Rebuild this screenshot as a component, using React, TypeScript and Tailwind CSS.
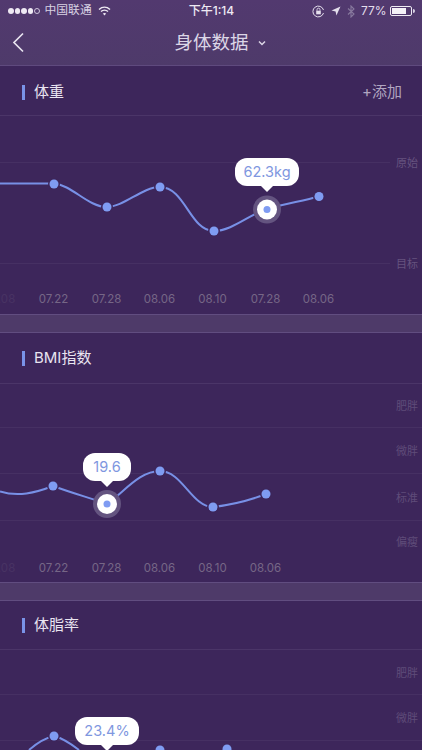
const font = { fontFamily: '"Inter", "Noto Sans CJK SC", sans-serif' };

function StatusBar() {
  return (
    <div className="flex h-[20px] items-center justify-between pl-[8px] pr-[7px] pt-[2px] text-[12px] text-[#e4deec]">
      <div className="flex w-[140px] items-center">
        <div className="flex gap-[1px]">
          <span className="h-[5.500px] w-[5.500px] rounded-full bg-[#eee9f3]" />
          <span className="h-[5.500px] w-[5.500px] rounded-full bg-[#eee9f3]" />
          <span className="h-[5.500px] w-[5.500px] rounded-full bg-[#eee9f3]" />
          <span className="h-[5.500px] w-[5.500px] rounded-full bg-[#eee9f3]" />
          <span className="h-[5.500px] w-[5.500px] rounded-full border-[0.5px] border-[#cfc6dc]" />
        </div>
        <span className="ml-[5px] text-[11.800px] text-[#d9d2e3]">中国联通</span>
        <svg className="ml-[6px]" width="13" height="10" viewBox="0 0 13 10" fill="none" stroke="#eee9f3">
          <path d="M1 3.400C4.300 .4 8.700 .4 12 3.400" strokeWidth="1.400" />
          <path d="M3 5.500C5 3.700 8 3.700 10 5.500" strokeWidth="1.400" />
          <path d="M6.500 9.600 4.800 7.500C5.800 6.700 7.200 6.700 8.200 7.500Z" fill="#eee9f3" stroke="none" />
        </svg>
      </div>
      <span className="text-[12px] font-medium text-[#eee9f3]">下午1:14</span>
      <div className="flex w-[140px] items-center justify-end">
        <svg width="13" height="13" viewBox="0 0 13 13" fill="none" stroke="#e4deec">
          <path d="M11.500 8A5.400 5.400 0 1 1 11.500 5" strokeWidth="1" />
          <rect x="4.200" y="5.700" width="4.600" height="3.600" fill="#e4deec" stroke="none" />
          <path d="M5 5.700V4.700a1.500 1.500 0 0 1 3 0v1" strokeWidth=".9" />
        </svg>
        <svg className="ml-[6px]" width="10" height="10" viewBox="0 0 10 10">
          <path d="M9.500 .5 5.400 9.500 4.600 5.400 .5 4.600Z" fill="#e4deec" />
        </svg>
        <svg className="ml-[6px]" width="8" height="13" viewBox="0 0 8 13" fill="none" stroke="#88799e" strokeWidth="1.100">
          <path d="M1 3.500 7 9 4 12V1L7 4 1 9.500" />
        </svg>
        <span className="ml-[6px] text-[#e4deec]">77%</span>
        <div className="ml-[4px] flex items-center">
          <div className="h-[10px] w-[22px] rounded-[2px] border border-[#eee9f3] p-[1px]">
            <div className="h-full w-[76%] bg-[#f4f1f7]" />
          </div>
          <div className="ml-[1px] h-[4px] w-[1.500px] rounded-r-sm bg-[#d9d2e3]" />
        </div>
      </div>
    </div>
  );
}

function NavBar() {
  return (
    <div className="relative flex h-[46px] items-center justify-center border-b border-[#5f4a7e] pl-[18px]">
      <svg className="absolute left-[12px] top-[12px]" width="13" height="21" viewBox="0 0 13 21" fill="none" stroke="#e8e3ef" strokeWidth="1.700">
        <path d="M11 1.500 2 10.500l9 9" />
      </svg>
      <span className="text-[18.500px] text-[#dcd6e6]">身体数据</span>
      <svg className="ml-[9px]" width="8" height="6" viewBox="0 0 8 6" fill="none" stroke="#dcd6e6" strokeWidth="1.500">
        <path d="M1 1.500 4 4.500 7 1.500" />
      </svg>
    </div>
  );
}

function Title({ text, add, className }: { text: string; add?: boolean; className: string }) {
  return (
    <div className={`flex items-center justify-between border-b border-[#4b3568] pl-[22px] pr-[20px] ${className}`}>
      <div className="flex items-center">
        <span className="h-[15px] w-[3px] bg-[#7a93e8]" />
        <span className="ml-[9px] text-[15px] text-[#e9e4f0]">{text}</span>
      </div>
      {add && <span className="text-[15px] text-[#b0a5c0]">+添加</span>}
    </div>
  );
}

// line with its label at the right end
function RefLine({ label, className }: { label: string; className: string }) {
  return (
    <div className={`flex items-center ${className}`}>
      <div className="h-px flex-1 bg-[#463063]" />
      <span className="ml-[6px] mr-[4px] w-[22px] pt-[2px] text-[11px] text-[#66537f]">{label}</span>
    </div>
  );
}

// label in the middle of a band, line under it
function Band({ label, height }: { label: string; height: string }) {
  return (
    <div className={`flex items-center justify-end border-b border-[#463063] pr-[4px] ${height}`}>
      <span className="w-[22px] pt-[2px] text-[11px] text-[#5f4c79]">{label}</span>
    </div>
  );
}

function Dates({ items }: { items: string[] }) {
  return (
    <div className="flex h-[12px] items-center text-[11.500px] text-[#766686]">
      <span className="ml-[-26px] w-[53px] text-center opacity-20">07.08</span>
      {items.map((d, i) => (
        <span key={i} className="w-[53px] text-center">
          {d}
        </span>
      ))}
    </div>
  );
}

function Curve({ d, dots, active }: { d: string; dots: number[][]; active: number[] }) {
  return (
    <svg className="absolute left-0 top-0" width="422" height="249" viewBox="0 0 422 249" fill="none">
      <path d={d} stroke="#7890e6" strokeWidth="2" />
      {dots.map(([x, y], i) => (
        <circle key={i} cx={x} cy={y} r="4.500" fill="#7f9cf2" stroke="#3d265b" strokeWidth="3" paintOrder="stroke" />
      ))}
      <circle cx={active[0]} cy={active[1]} r="14" fill="#645480" />
      <circle cx={active[0]} cy={active[1]} r="10" fill="#ffffff" />
      <circle cx={active[0]} cy={active[1]} r="3.500" fill="#7f9cf2" />
    </svg>
  );
}

function Tip({ text, className }: { text: string; className: string }) {
  return (
    <div className={`absolute flex h-[28px] items-center justify-center rounded-[12px] bg-white text-[14.500px] text-[#7f97e0] ${className}`}>
      {text}
      <span className="absolute left-1/2 top-[27px] h-0 w-0 -translate-x-1/2 border-x-[7px] border-t-[7px] border-x-transparent border-t-white" />
    </div>
  );
}

function Divider() {
  return <div className="h-[19px] border-y border-[#614d80] bg-[#4e3a69]" />;
}

export default function App() {
  return (
    <div className="h-screen w-full overflow-hidden bg-[#3d265b]" style={font}>
      <div className="bg-gradient-to-b from-[#52396f] to-[#4e3a6a]">
        <StatusBar />
        <NavBar />
      </div>

      <section className="relative h-[248px]">
        <Title text="体重" add className="h-[50px] pt-[3px]" />
        <div className="flex flex-col">
          <RefLine label="原始" className="mt-[36px] h-[20px]" />
          <RefLine label="目标" className="mt-[81px] h-[20px]" />
        </div>
        <div className="mt-[21px]">
          <Dates items={["07.22", "07.28", "08.06", "08.10", "07.28", "08.06"]} />
        </div>
        <Curve
          d="M0 117.500H54C72 119 88 141 107 141C124 141 142 121 160 121C185 121 190 165 214 165C232 165 250 148 267 143C285 138 302 135 319 130.500"
          dots={[[54, 118], [107, 141], [160, 121], [214, 165], [319, 130.500]]}
          active={[267, 143.500]}
        />
        <Tip text="62.3kg" className="left-[235px] top-[92px] w-[64px]" />
      </section>

      <Divider />

      <section className="relative h-[249px]">
        <Title text="BMI指数" className="h-[51px]" />
        <Band label="肥胖" height="h-[44px]" />
        <Band label="微胖" height="h-[46px]" />
        <Band label="标准" height="h-[47px]" />
        <div className="flex h-[42px] items-center justify-end pr-[4px]">
          <span className="w-[22px] pt-[1px] text-[11px] text-[#5f4c79]">偏瘦</span>
        </div>
        <Dates items={["07.22", "07.28", "08.06", "08.10", "08.06"]} />
        <Curve
          d="M0 158.500C18 164 35 160 53 153C72 160 90 165 107 171C125 158 140 138 160 138C182 138 192 174 213 174C230 172 248 168 266 161"
          dots={[[53, 153], [160, 138], [213, 174], [266, 161]]}
          active={[107, 171]}
        />
        <Tip text="19.6" className="left-[83px] top-[120px] w-[48px]" />
      </section>

      <Divider />

      <section className="relative">
        <Title text="体脂率" className="h-[49px]" />
        <Band label="肥胖" height="h-[45px]" />
        <Band label="微胖" height="h-[46px]" />
        <svg className="absolute left-0 top-0" width="422" height="149" viewBox="0 0 422 149" fill="none">
          <path d="M29 149C37 142 45 137 54 135C62 137 70 142 79 149" stroke="#7890e6" strokeWidth="2" />
          <circle cx="54" cy="135" r="4.500" fill="#7f9cf2" stroke="#3d265b" strokeWidth="3" paintOrder="stroke" />
          <circle cx="160" cy="149" r="4.500" fill="#7f9cf2" />
          <circle cx="227" cy="148" r="4.500" fill="#7f9cf2" />
        </svg>
        <Tip text="23.4%" className="left-[75px] top-[116px] w-[64px]" />
      </section>
    </div>
  );
}
